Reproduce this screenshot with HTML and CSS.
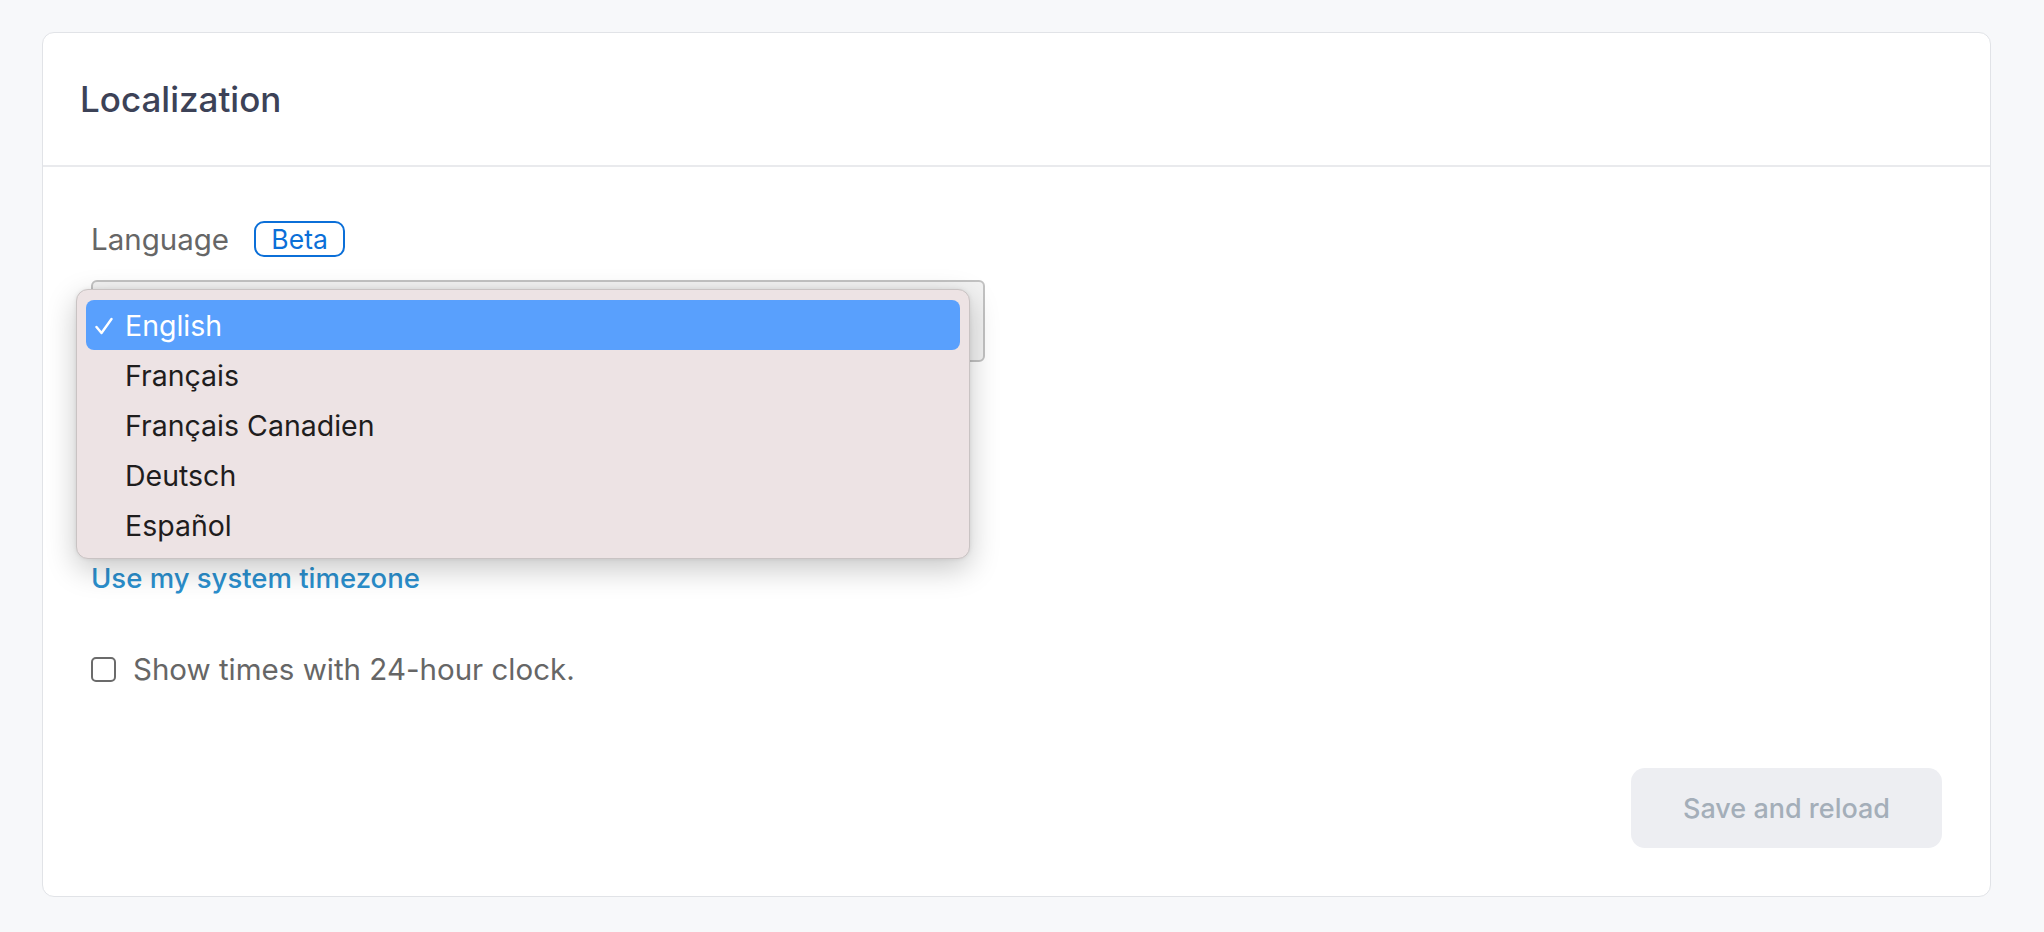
FILE: index.html
```html
<!DOCTYPE html>
<html lang="en">
<head>
<meta charset="utf-8">
<title>Localization</title>
<link rel="stylesheet" href="styles.css">
</head>
<body>
<div class="card">
  <div class="card-header">
    <h2 class="title">Localization</h2>
  </div>
  <div class="card-body">
    <div class="label-row">
      <span class="label">Language</span>
      <span class="badge">Beta</span>
    </div>
    <div class="select-wrap">
      <div class="select"></div>
      <div class="menu">
        <div class="item selected"><span class="check"><svg class="check-icon" viewBox="0 0 18 18" width="18" height="18"><polyline points="1.5,10 6.5,16 16.5,2" fill="none" stroke="#ffffff" stroke-width="2.4" stroke-linecap="round" stroke-linejoin="round"/></svg></span><span class="item-text">English</span></div>
        <div class="item"><span class="check"></span><span class="item-text">Français</span></div>
        <div class="item"><span class="check"></span><span class="item-text">Français Canadien</span></div>
        <div class="item"><span class="check"></span><span class="item-text">Deutsch</span></div>
        <div class="item"><span class="check"></span><span class="item-text">Español</span></div>
      </div>
    </div>
    <a class="link" href="#">Use my system timezone</a>
    <label class="check-row">
      <span class="checkbox"></span>
      <span class="check-text">Show times with 24-hour clock.</span>
    </label>
    <div class="actions">
      <button class="btn" disabled>Save and reload</button>
    </div>
  </div>
</div>
</body>
</html>
```
FILE: styles.css
```css
* { box-sizing: border-box; }
html, body { margin: 0; padding: 0; }
body {
  background: #f7f8fa;
  font-family: Inter, "Noto Sans", "Liberation Sans", sans-serif;
  width: 2044px;
  height: 932px;
  overflow: hidden;
}
.card {
  margin: 32px 53px 0 42px;
  height: 865px;
  background: #ffffff;
  border: 1px solid #e1e3e7;
  border-radius: 12px;
  display: flex;
  flex-direction: column;
}
.card-header {
  height: 134px;
  border-bottom: 2px solid #e9eaed;
  display: flex;
  align-items: center;
  padding: 0 37px;
}
.title {
  margin: 0;
  font-size: 35px;
  font-weight: 450;
  color: #3c4257;
  line-height: 40px;
}
.card-body {
  flex: 1;
  padding: 54px 48px 48px 48px;
  display: flex;
  flex-direction: column;
  align-items: flex-start;
}
.label-row {
  display: flex;
  align-items: center;
  height: 36px;
  gap: 25px;
}
.label {
  font-size: 29.5px;
  color: #666666;
  line-height: 36px;
}
.badge {
  width: 91px;
  height: 36px;
  border: 2px solid #0b6fd8;
  border-radius: 10px;
  color: #0b6fd8;
  font-size: 26.5px;
  font-weight: 400;
  display: flex;
  align-items: center;
  justify-content: center;
}
.select-wrap {
  position: relative;
  margin-top: 23px;
  width: 894px;
}
.select {
  width: 894px;
  height: 82px;
  background: #f2f2f2;
  border: 2px solid #c2c2c2;
  border-radius: 6px;
}
.menu {
  position: absolute;
  left: -15px;
  top: 9px;
  width: 894px;
  height: 270px;
  background: #ede3e4;
  border: 1px solid #c9c3c3;
  border-radius: 12px;
  box-shadow: 0 10px 30px rgba(0, 0, 0, 0.22), 0 0 4px rgba(0, 0, 0, 0.08);
  padding: 10px 9px;
  z-index: 5;
}
.item {
  height: 50px;
  display: flex;
  align-items: center;
  border-radius: 8px;
  color: #1f1d1d;
  font-size: 28.5px;
  padding-left: 8px;
}
.item.selected {
  background: #59a0fd;
  color: #ffffff;
}
.check {
  width: 31px;
  display: flex;
  align-items: center;
}
.check-icon {
  display: block;
  margin-left: 1px;
  margin-top: 2px;
}
.link {
  margin-top: 198px;
  font-size: 27.5px;
  line-height: 36px;
  font-weight: 500;
  color: #2b8fcd;
  text-decoration: none;
}
.check-row {
  margin-top: 55px;
  display: flex;
  align-items: center;
  gap: 17px;
  height: 36px;
}
.checkbox {
  width: 25px;
  height: 25px;
  border: 2px solid #6b6b6b;
  border-radius: 5px;
  background: #ffffff;
}
.check-text {
  font-size: 29.5px;
  color: #666666;
}
.actions {
  margin-top: auto;
  align-self: stretch;
  display: flex;
  justify-content: flex-end;
}
.btn {
  width: 311px;
  height: 80px;
  border: none;
  border-radius: 14px;
  background: #edeef2;
  color: #a4aeb9;
  font-family: inherit;
  font-size: 27px;
  font-weight: 500;
}
```
